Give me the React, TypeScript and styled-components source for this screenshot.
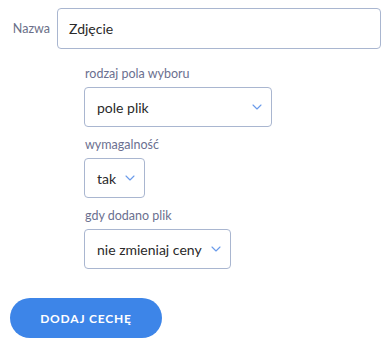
import React from "react";
import styled, { createGlobalStyle } from "styled-components";

const Global = createGlobalStyle`
  html, body { margin: 0; padding: 0; background: #fff; }
  body { font-family: Lato, "Open Sans", sans-serif; }
`;

const Page = styled.div`
  padding: 8px 6px 0 10px;
  display: flex;
  flex-direction: column;
`;

const NameRow = styled.div`
  display: flex;
  align-items: center;
  gap: 7px;
`;

const NameLabel = styled.label`
  font-size: 12.5px;
  color: #6b6f88;
  width: 40px;
  text-align: right;
`;

const TextInput = styled.div`
  flex: 1;
  box-sizing: border-box;
  height: 41px;
  border: 1px solid #a9b6d0;
  border-radius: 4px;
  display: flex;
  align-items: center;
  padding-left: 11px;
  font-size: 14px;
  color: #2a2a2a;
`;

const Fields = styled.div`
  display: flex;
  flex-direction: column;
  padding-left: 74px;
  margin-top: 16px;
`;

const Field = styled.div`
  display: flex;
  flex-direction: column;
  gap: 5px;
  margin-bottom: 9px;
`;

const FieldLabel = styled.div`
  font-size: 12.5px;
  color: #6b7090;
  line-height: 17px;
  padding-left: 1px;
`;

const Select = styled.div<{ $w: number }>`
  box-sizing: border-box;
  width: ${(p) => p.$w}px;
  height: 40px;
  border: 1px solid #a9b6d0;
  border-radius: 4px;
  display: flex;
  align-items: center;
  justify-content: space-between;
  padding: 0 9px 0 12px;
  font-size: 14px;
  color: #2a2a2a;
  white-space: nowrap;
`;

const Chevron = () => (
  <svg width="10" height="6" viewBox="0 0 10 6" fill="none">
    <path d="M1 1l4 4 4-4" stroke="#6a9bea" strokeWidth="1.1" strokeLinecap="round" strokeLinejoin="round" />
  </svg>
);

const Button = styled.button`
  margin-top: 20px;
  width: 152px;
  height: 40px;
  border: none;
  border-radius: 20px;
  background: #3d85e8;
  color: #fff;
  font-family: Lato, "Open Sans", sans-serif;
  font-weight: 700;
  font-size: 12px;
  letter-spacing: 0.8px;
  padding: 0;
`;

export default function App() {
  return (
    <>
      <Global />
      <Page>
        <NameRow>
          <NameLabel>Nazwa</NameLabel>
          <TextInput>Zdjęcie</TextInput>
        </NameRow>
        <Fields>
          <Field>
            <FieldLabel>rodzaj pola wyboru</FieldLabel>
            <Select $w={188}>
              pole plik
              <Chevron />
            </Select>
          </Field>
          <Field>
            <FieldLabel>wymagalność</FieldLabel>
            <Select $w={61}>
              tak
              <Chevron />
            </Select>
          </Field>
          <Field>
            <FieldLabel>gdy dodano plik</FieldLabel>
            <Select $w={147}>
              nie zmieniaj ceny
              <Chevron />
            </Select>
          </Field>
        </Fields>
        <div>
          <Button>DODAJ CECHĘ</Button>
        </div>
      </Page>
    </>
  );
}
